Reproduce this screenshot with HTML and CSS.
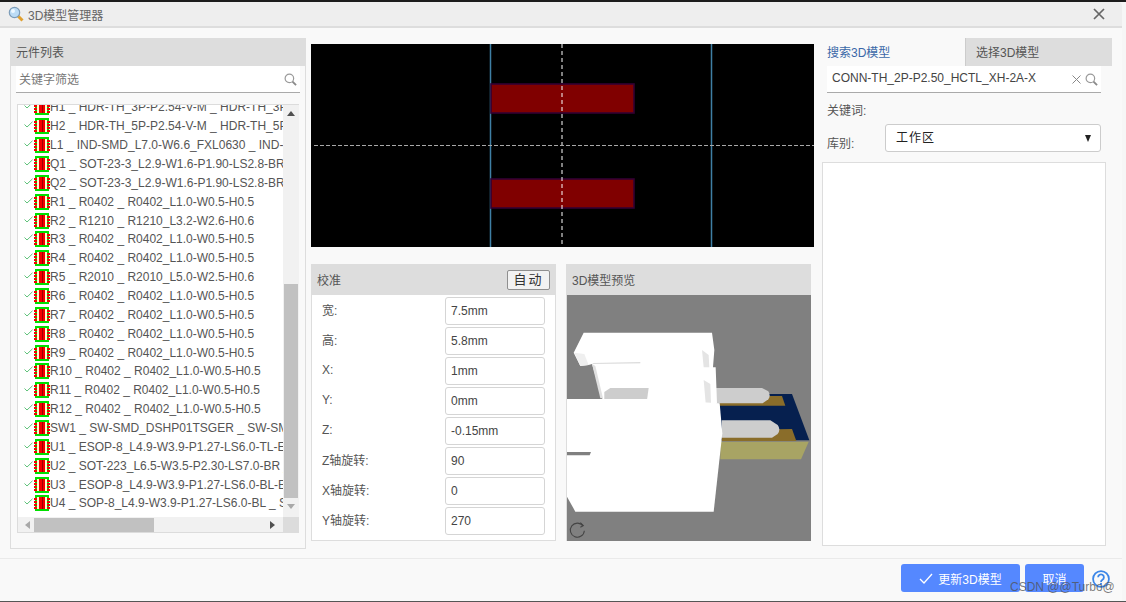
FILE: index.html
```html
<!DOCTYPE html>
<html lang="zh">
<head>
<meta charset="utf-8">
<title>3D模型管理器</title>
<link rel="stylesheet" href="styles.css">
</head>
<body>
<svg class="defs" width="0" height="0" aria-hidden="true">
  <symbol id="chip" viewBox="0 0 16 16">
    <g shape-rendering="crispEdges">
      <rect x="1" y="0" width="14" height="16" fill="#00e000"/>
      <rect x="3" y="2" width="10" height="12" fill="#ffffd0"/>
      <rect x="5" y="2" width="6" height="12" fill="#f40000"/>
      <rect x="8" y="2" width="1" height="12" fill="#a00000"/>
      <path d="M0 3h3v2H0zM0 6h3v2H0zM0 9h3v2H0zM0 12h3v2H0zM13 3h3v2h-3zM13 6h3v2h-3zM13 9h3v2h-3zM13 12h3v2h-3z" fill="#f40000"/>
    </g>
  </symbol>
  <symbol id="tick" viewBox="0 0 9 7">
    <path d="M.5 3.500 3 6 8.500 .8" fill="none" stroke="#5fc27a" stroke-width="1"/>
  </symbol>
  <symbol id="lens" viewBox="0 0 14 14">
    <circle cx="5.800" cy="5.800" r="4.600" fill="none" stroke="#9a9a9a" stroke-width="1.300"/>
    <path d="M9.200 9.200 13 13" stroke="#8a8a8a" stroke-width="2"/>
  </symbol>
</svg>
<div class="dialog">
  <header class="titlebar">
    <svg class="title-icon" viewBox="0 0 16 16" width="16" height="16">
      <path d="M10 10l4.500 4.500" stroke="#e0a030" stroke-width="3"/>
      <circle cx="6.500" cy="6.500" r="5.200" fill="#bcdcf5" stroke="#7c9cb8" stroke-width="1.200"/>
      <circle cx="5" cy="5" r="2" fill="#eef8ff"/>
    </svg>
    <span class="title-text">3D模型管理器</span>
    <svg class="close-icon" viewBox="0 0 12 12" width="12" height="12"><path d="M1 1l10 10M11 1 1 11" stroke="#666" stroke-width="1.700"/></svg>
  </header>

  <main class="body">
    <section class="left-panel">
      <div class="panel-head left-head">元件列表</div>
      <div class="search left-search">
        <span class="search-text placeholder">关键字筛选</span>
        <svg class="lens"><use href="#lens"/></svg>
      </div>
      <div class="listbox">
        <div class="rows">
          <div class="row"><svg class="tick"><use href="#tick"/></svg><svg class="chip"><use href="#chip"/></svg><span>H1 _ HDR-TH_3P-P2.54-V-M _ HDR-TH_3P-P2.54-V-M</span></div>
          <div class="row"><svg class="tick"><use href="#tick"/></svg><svg class="chip"><use href="#chip"/></svg><span>H2 _ HDR-TH_5P-P2.54-V-M _ HDR-TH_5P-P2.54-V-M</span></div>
          <div class="row"><svg class="tick"><use href="#tick"/></svg><svg class="chip"><use href="#chip"/></svg><span>L1 _ IND-SMD_L7.0-W6.6_FXL0630 _ IND-SMD_L7.0</span></div>
          <div class="row"><svg class="tick"><use href="#tick"/></svg><svg class="chip"><use href="#chip"/></svg><span>Q1 _ SOT-23-3_L2.9-W1.6-P1.90-LS2.8-BR _ SOT-23</span></div>
          <div class="row"><svg class="tick"><use href="#tick"/></svg><svg class="chip"><use href="#chip"/></svg><span>Q2 _ SOT-23-3_L2.9-W1.6-P1.90-LS2.8-BR _ SOT-23</span></div>
          <div class="row"><svg class="tick"><use href="#tick"/></svg><svg class="chip"><use href="#chip"/></svg><span>R1 _ R0402 _ R0402_L1.0-W0.5-H0.5</span></div>
          <div class="row"><svg class="tick"><use href="#tick"/></svg><svg class="chip"><use href="#chip"/></svg><span>R2 _ R1210 _ R1210_L3.2-W2.6-H0.6</span></div>
          <div class="row"><svg class="tick"><use href="#tick"/></svg><svg class="chip"><use href="#chip"/></svg><span>R3 _ R0402 _ R0402_L1.0-W0.5-H0.5</span></div>
          <div class="row"><svg class="tick"><use href="#tick"/></svg><svg class="chip"><use href="#chip"/></svg><span>R4 _ R0402 _ R0402_L1.0-W0.5-H0.5</span></div>
          <div class="row"><svg class="tick"><use href="#tick"/></svg><svg class="chip"><use href="#chip"/></svg><span>R5 _ R2010 _ R2010_L5.0-W2.5-H0.6</span></div>
          <div class="row"><svg class="tick"><use href="#tick"/></svg><svg class="chip"><use href="#chip"/></svg><span>R6 _ R0402 _ R0402_L1.0-W0.5-H0.5</span></div>
          <div class="row"><svg class="tick"><use href="#tick"/></svg><svg class="chip"><use href="#chip"/></svg><span>R7 _ R0402 _ R0402_L1.0-W0.5-H0.5</span></div>
          <div class="row"><svg class="tick"><use href="#tick"/></svg><svg class="chip"><use href="#chip"/></svg><span>R8 _ R0402 _ R0402_L1.0-W0.5-H0.5</span></div>
          <div class="row"><svg class="tick"><use href="#tick"/></svg><svg class="chip"><use href="#chip"/></svg><span>R9 _ R0402 _ R0402_L1.0-W0.5-H0.5</span></div>
          <div class="row"><svg class="tick"><use href="#tick"/></svg><svg class="chip"><use href="#chip"/></svg><span>R10 _ R0402 _ R0402_L1.0-W0.5-H0.5</span></div>
          <div class="row"><svg class="tick"><use href="#tick"/></svg><svg class="chip"><use href="#chip"/></svg><span>R11 _ R0402 _ R0402_L1.0-W0.5-H0.5</span></div>
          <div class="row"><svg class="tick"><use href="#tick"/></svg><svg class="chip"><use href="#chip"/></svg><span>R12 _ R0402 _ R0402_L1.0-W0.5-H0.5</span></div>
          <div class="row"><svg class="tick"><use href="#tick"/></svg><svg class="chip"><use href="#chip"/></svg><span>SW1 _ SW-SMD_DSHP01TSGER _ SW-SMD_DSHP01</span></div>
          <div class="row"><svg class="tick"><use href="#tick"/></svg><svg class="chip"><use href="#chip"/></svg><span>U1 _ ESOP-8_L4.9-W3.9-P1.27-LS6.0-TL-EP _ ESOP-8</span></div>
          <div class="row"><svg class="tick"><use href="#tick"/></svg><svg class="chip"><use href="#chip"/></svg><span>U2 _ SOT-223_L6.5-W3.5-P2.30-LS7.0-BR _ SOT-223</span></div>
          <div class="row"><svg class="tick"><use href="#tick"/></svg><svg class="chip"><use href="#chip"/></svg><span>U3 _ ESOP-8_L4.9-W3.9-P1.27-LS6.0-BL-EP _ ESOP-8</span></div>
          <div class="row"><svg class="tick"><use href="#tick"/></svg><svg class="chip"><use href="#chip"/></svg><span>U4 _ SOP-8_L4.9-W3.9-P1.27-LS6.0-BL _ SOP-8_L4.9</span></div>
        </div>
        <div class="vscroll">
          <span class="arrow arrow-up"></span>
          <span class="vthumb"></span>
          <span class="arrow arrow-down"></span>
        </div>
        <div class="hscroll">
          <span class="arrow arrow-left"></span>
          <span class="hthumb"></span>
          <span class="arrow arrow-right"></span>
        </div>
        <div class="corner"></div>
      </div>
    </section>

    <section class="center">
      <svg class="footprint" viewBox="311 44 503 203" width="503" height="203">
        <rect x="311" y="44" width="503" height="203" fill="#000"/>
        <path d="M490.500 44v203M711.500 44v203" stroke="#3f7fa5" stroke-width="1.500"/>
        <g fill="#800000" stroke="#330033" stroke-width="1.600">
          <rect x="491" y="84" width="143" height="29"/>
          <rect x="491" y="179" width="143" height="29"/>
        </g>
        <path d="M562 44v203" stroke="#fff" stroke-width="1" stroke-dasharray="4 3"/>
        <path d="M314 145.500h500" stroke="#a8a8a8" stroke-width="1" stroke-dasharray="4 2"/>
      </svg>
      <div class="lower">
        <div class="calib">
          <div class="panel-head calib-head"><span>校准</span><button class="auto">自动</button></div>
          <div class="form">
            <label class="field"><span class="field-label">宽:</span><span class="input">7.5mm</span></label>
            <label class="field"><span class="field-label">高:</span><span class="input">5.8mm</span></label>
            <label class="field"><span class="field-label">X:</span><span class="input">1mm</span></label>
            <label class="field"><span class="field-label">Y:</span><span class="input">0mm</span></label>
            <label class="field"><span class="field-label">Z:</span><span class="input">-0.15mm</span></label>
            <label class="field"><span class="field-label">Z轴旋转:</span><span class="input">90</span></label>
            <label class="field"><span class="field-label">X轴旋转:</span><span class="input">0</span></label>
            <label class="field"><span class="field-label">Y轴旋转:</span><span class="input">270</span></label>
          </div>
        </div>
        <div class="preview">
          <div class="panel-head preview-head">3D模型预览</div>
          <svg class="scene" viewBox="20 105 732 738" width="244" height="246">
            <rect x="20" y="105" width="732" height="738" fill="#808080"/>
            <polygon points="478,402 695,402 747,541 478,541" fill="#06204f"/>
            <polygon points="478,408 665,408 675,437 478,437" fill="#8a6d2a"/>
            <polygon points="484,510 695,507 708,543 484,543" fill="#8a6d2a"/>
            <polygon points="480,545 745,545 722,598 480,598" fill="#a8a464"/>
            <path d="M465 384H605L624 394Q632 407 624 418L607 430H465Z" fill="#cdcdcd"/>
            <path d="M484 481H630L652 495Q662 508 652 522L635 533H484Z" fill="#cdcdcd"/>
            <polygon points="70,218 455,218 462,270 458,322 466,322 470,430 130,430 95,312 85,315 60,318 40,278" fill="#fff"/>
            <polygon points="95,309 240,307 240,310 100,311" fill="#d0d0d0"/>
            <polygon points="95,312 105,318 128,415 120,415" fill="#e0e0e0"/>
            <polygon points="42,278 72,282 85,315 60,318" fill="#efefef"/>
            <polygon points="425,270 445,285 447,322 430,322" fill="#e4e4e4"/>
            <polygon points="430,360 450,372 452,430 436,430" fill="#e4e4e4"/>
            <polygon points="150,384 265,384 260,420 132,420 132,396" fill="#cdcdcd"/>
            <polygon points="20,417 260,417 478,430 486,520 460,755 45,755 20,710" fill="#fff"/>
            <polygon points="20,576 92,576 88,586 20,586" fill="#808080"/>
            <g fill="none" stroke="#444" stroke-width="3.200">
              <path d="M68 798a21 21 0 1 0 4 14"/>
              <path d="M60 788l9 9-9 5"/>
            </g>
          </svg>
        </div>
      </div>
    </section>

    <section class="right-panel">
      <div class="tabs">
        <div class="tab tab-active">搜索3D模型</div>
        <div class="tab">选择3D模型</div>
      </div>
      <div class="right-body">
        <div class="search right-search">
          <span class="search-text">CONN-TH_2P-P2.50_HCTL_XH-2A-X</span>
          <svg class="clear" viewBox="0 0 9 9" width="9" height="9"><path d="M.5.500l8 8M8.500.500l-8 8" stroke="#888" stroke-width="1"/></svg>
          <svg class="lens"><use href="#lens"/></svg>
        </div>
        <div class="keyword">关键词:</div>
        <div class="lib-row">
          <span class="lib-label">库别:</span>
          <div class="select"><span class="select-value">工作区</span><span class="caret"></span></div>
        </div>
        <div class="results"></div>
      </div>
    </section>
  </main>

  <footer class="footer">
    <button class="btn btn-update">
      <svg viewBox="0 0 14 11" width="14" height="11"><path d="M1 6l4 4 8-9" fill="none" stroke="#fff" stroke-width="1.300"/></svg>
      更新3D模型
    </button>
    <button class="btn btn-cancel">取消</button>
    <svg class="help" viewBox="0 0 20 20" width="18" height="18">
      <circle cx="10" cy="10" r="8.800" fill="none" stroke="#3b86e8" stroke-width="2"/>
      <path d="M6.800 8a3.200 3.200 0 1 1 4.800 2.800c-1 .6-1.600 1-1.600 2.400" fill="none" stroke="#3b86e8" stroke-width="2"/>
      <circle cx="10" cy="15.500" r="1.200" fill="#3b86e8"/>
    </svg>
  </footer>
  <div class="watermark">CSDN @@Turbo@</div>
</div>
</body>
</html>
```
FILE: styles.css
```css
* { box-sizing: border-box; }
html, body { margin: 0; padding: 0; }
body {
  width: 1126px;
  height: 602px;
  overflow: hidden;
  background: #f6f6f6;
  border-top: 2px solid #1c1c1c;
  border-bottom: 1px solid #555;
  font-family: "Liberation Sans", "Noto Sans CJK SC", sans-serif;
  font-size: 12px;
  color: #555;
}
.defs { position: absolute; }
.dialog {
  position: relative;
  width: 1122px;
  height: 599px;
  display: flex;
  flex-direction: column;
  background: #f9f9f9;
  border-top-right-radius: 4px;
}
.titlebar {
  height: 26px;
  flex: none;
  display: flex;
  align-items: center;
  padding: 0 17px 0 8px;
  background: #eeeeee;
  border-bottom: 2px solid #dddddd;
  border-top-right-radius: 4px;
}
.title-icon { margin-right: 4px; }
.title-text { flex: 1; font-size: 12px; color: #666; }
.body {
  height: 531px;
  flex: none;
  display: flex;
  padding: 10px 0 0 10px;
  border-bottom: 1px solid #eaeaea;
}
.panel-head {
  background: #dddddd;
  display: flex;
  align-items: center;
  color: #555;
}

/* left */
.left-panel {
  width: 296px;
  height: 511px;
  flex: none;
  display: flex;
  flex-direction: column;
  border: 1px solid #dddddd;
  border-top: 0;
  padding: 0 5px;
}
.left-head { height: 28px; margin: 0 -5px; padding: 0 0 2px 5px; }
.search {
  height: 27px;
  flex: none;
  display: flex;
  align-items: center;
  background: #fff;
  border-bottom: 1px solid #aaa;
}
.left-search { padding: 0 3px; }
.search-text { flex: 1; font-size: 12px; white-space: nowrap; color: #444; margin-top: -2px; }
.placeholder { color: #777; }
.lens { width: 13px; height: 13px; flex: none; }
.listbox {
  margin: 11px 0 0 1px;
  width: 282px;
  height: 429px;
  display: grid;
  grid-template-columns: 265px 16px;
  grid-template-rows: 412px 15px;
  border: 1px solid #dcdcdc;
  border-right: 0;
  background: #fff;
  overflow: hidden;
}
.rows { overflow: hidden; }
.row {
  height: 18.870px;
  display: flex;
  align-items: center;
  padding-left: 6px;
  white-space: nowrap;
  color: #555;
  font-size: 12px;
}
.row:first-child { margin-top: -7px; }
.tick { width: 9px; height: 7px; flex: none; margin: -3px 1px 0 0; }
.chip { width: 16px; height: 16px; flex: none; }
.vscroll {
  background: #f1f1f1;
  display: flex;
  flex-direction: column;
  align-items: center;
  padding: 6px 0 0;
}
.vthumb { width: 14px; height: 214px; margin-top: 168px; background: #c1c1c1; flex: none; }
.arrow { width: 0; height: 0; border: 4px solid transparent; flex: none; }
.arrow-up { border-bottom: 5px solid #505050; border-top: 0; }
.arrow-down { border-top: 5px solid #a8a8a8; border-bottom: 0; margin-top: 6px; }
.hscroll {
  background: #f1f1f1;
  display: flex;
  align-items: center;
  padding-left: 7px;
}
.hthumb { width: 120px; height: 14px; margin-left: 4px; background: #c1c1c1; flex: none; }
.arrow-left { border-right: 5px solid #a8a8a8; border-left: 0; }
.arrow-right { border-left: 5px solid #505050; border-right: 0; margin-left: 116px; }
.corner { background: #dcdcdc; }

/* center */
.center {
  width: 516px;
  flex: none;
  padding: 6px 0 0 5px;
  display: flex;
  flex-direction: column;
}
.footprint { display: block; flex: none; }
.lower { display: flex; gap: 10px; margin-top: 17px; }
.calib {
  width: 245px;
  height: 277px;
  background: #fff;
  border: 1px solid #dddddd;
  border-top: 0;
  display: flex;
  flex-direction: column;
}
.calib-head {
  height: 31px;
  justify-content: space-between;
  padding: 0 6px 0 6px;
  margin: 0 -1px;
}
.auto {
  width: 43px;
  height: 20px;
  padding: 0 0 4px;
  font: 13px/16px "Noto Sans CJK SC", sans-serif;
  letter-spacing: 2px;
  color: #333;
  background: #f2f2f2;
  border: 1px solid #8f8f8f;
  border-radius: 2px;
}
.form { padding: 2px 10px 0 10px; display: flex; flex-direction: column; gap: 2px; }
.field { display: flex; align-items: center; justify-content: space-between; height: 28px; }
.field-label { margin-top: -3px; }
.input {
  width: 100px;
  height: 28px;
  line-height: 26px;
  padding-left: 5px;
  background: #fff;
  border: 1px solid #d5d5d5;
  border-radius: 3px;
  color: #444;
}
.preview {
  width: 245px;
  height: 277px;
  background: #fff;
  border: 1px solid #dddddd;
  border-top: 0;
}
.preview-head { height: 31px; padding-left: 6px; margin: 0 -1px; }
.scene { display: block; }

/* right */
.right-panel {
  width: 290px;
  flex: none;
  height: 510px;
  display: flex;
  flex-direction: column;
}
.tabs { display: flex; height: 28px; flex: none; }
.tab {
  width: 147px;
  display: flex;
  align-items: center;
  padding: 0 0 2px 10px;
  background: #dddddd;
  color: #555;
  font-size: 12px;
  border-left: 1px solid #ccc;
}
.tab-active { width: 143px; background: #f9f9f9; color: #3b68a8; border: 0; padding-left: 5px; }
.right-body { flex: 1; display: flex; flex-direction: column; }
.right-search { margin: 0 11px 0 5px; padding: 0 3px 0 5px; }
.clear { margin-right: 4px; flex: none; }
.keyword { margin: 9px 0 0 5px; height: 18px; line-height: 18px; color: #555; }
.lib-row { display: flex; align-items: center; height: 28px; margin-top: 4px; }
.lib-label { width: 63px; padding-left: 5px; padding-top: 8px; color: #555; }
.select {
  width: 216px;
  height: 28px;
  display: flex;
  align-items: center;
  justify-content: space-between;
  padding: 0 9px 0 10px;
  background: #fff;
  border: 1px solid #ccc;
  border-radius: 3px;
  color: #222;
  font-size: 12px;
  letter-spacing: 1px;
  font-family: "Noto Sans CJK SC", sans-serif;
}
.select-value { margin-top: -4px; }
.caret { width: 0; height: 0; border: 3.500px solid transparent; border-top: 7px solid #222; border-bottom: 0; }
.results {
  width: 284px;
  height: 384px;
  margin: 10px 0 0 0;
  background: #fff;
  border: 1px solid #dddddd;
}

/* footer */
.footer {
  flex: 1;
  display: flex;
  align-items: flex-start;
  padding: 5px 0 0 901px;
}
.btn {
  height: 28px;
  border: 0;
  border-radius: 3px;
  background: #5588ff;
  color: #fff;
  font: 12px "Liberation Sans", "Noto Sans CJK SC", sans-serif;
  display: flex;
  align-items: center;
  justify-content: center;
  gap: 5px;
  padding: 0;
}
.btn-update { width: 119px; }
.btn-cancel { width: 59px; margin-left: 5px; }
.help { margin: 6px 0 0 8px; flex: none; }
.watermark {
  position: absolute;
  left: 1010px;
  top: 578px;
  font-size: 12px;
  color: rgba(80, 80, 80, .75);
  white-space: nowrap;
}
```
